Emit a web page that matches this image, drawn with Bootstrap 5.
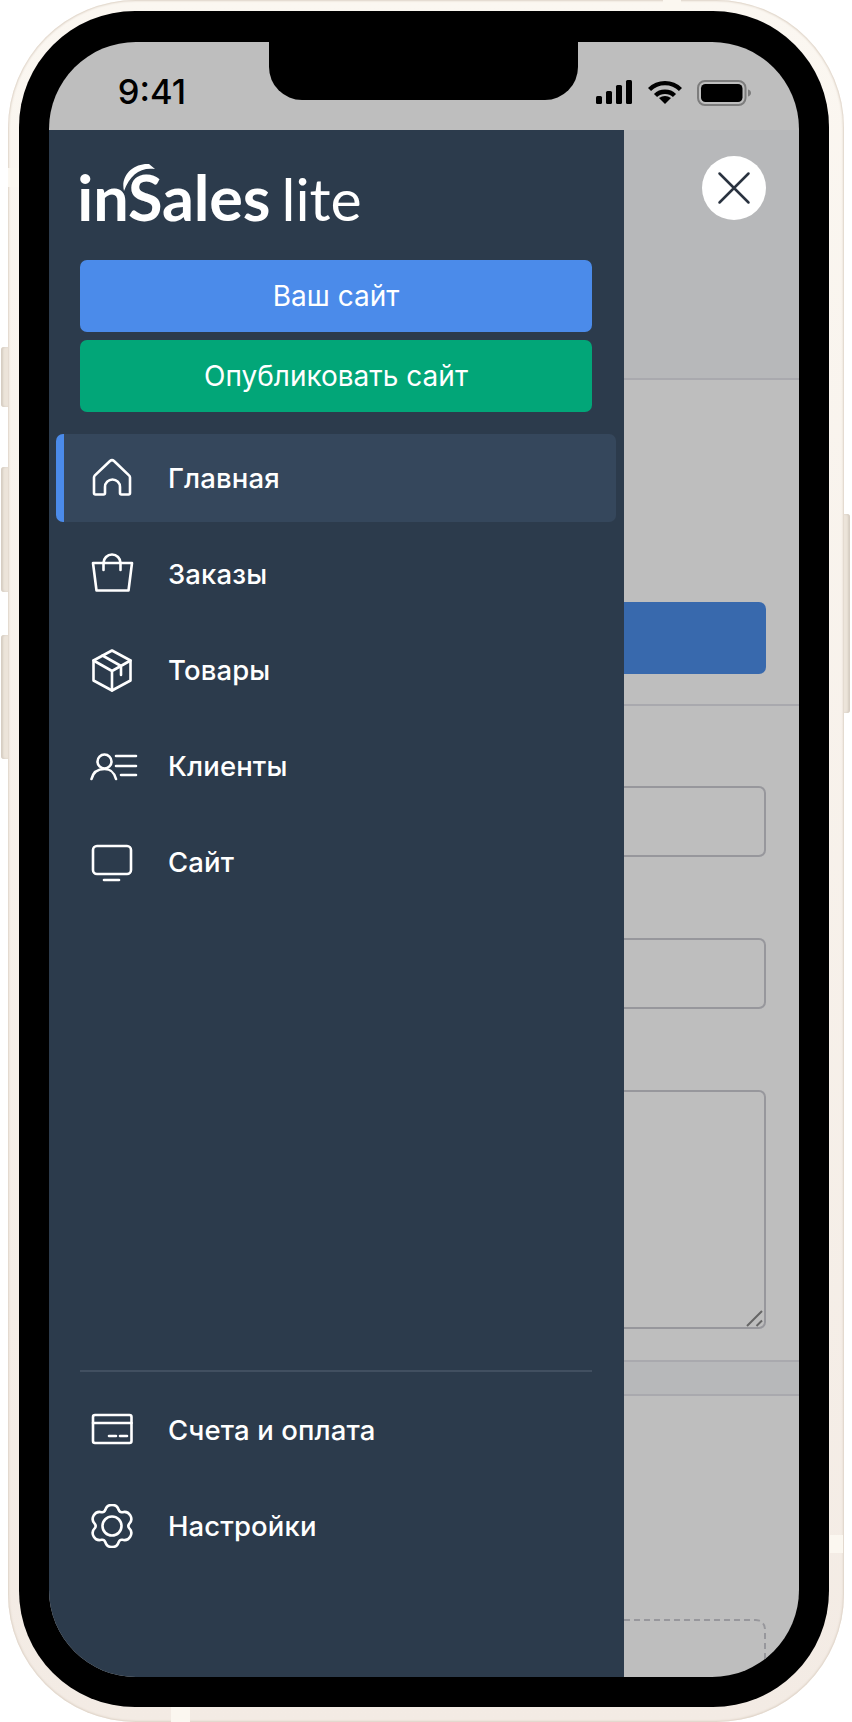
<!doctype html>
<html lang="ru">
<head>
<meta charset="utf-8">
<title>inSales lite</title>
<link href="https://cdn.jsdelivr.net/npm/bootstrap@5.3.0/dist/css/bootstrap.min.css" rel="stylesheet">
<style>
html,body{margin:0;background:#fff;font-family:"Inter","Liberation Sans",sans-serif}
.stage{width:852px;height:1722px;padding-left:8px;position:relative;overflow:hidden}
.shell{width:835.5px;height:1722px;padding:11px 14.8px 15.3px 11px;border-radius:128px;background:linear-gradient(180deg,#fbf7f1,#f3ebe4);position:relative;box-shadow:inset 0 0 2px 1px #ddd2c6}
.bezel{height:100%;padding:30.5px 30px 30px 30.3px;border-radius:116px;background:#000}
.screen{height:100%;border-radius:87px;overflow:hidden;background:#bebebe;position:relative;display:flex;flex-direction:column}
.sidekey{position:absolute;width:8px;background:#ece4da;box-shadow:inset 2px 0 2px #d6cdc2}
.key1{left:1px;top:347px;height:60px;border-radius:3px 0 0 3px}
.key2{left:1px;top:467px;height:125px;border-radius:3px 0 0 3px}
.key3{left:1px;top:635px;height:124px;border-radius:3px 0 0 3px}
.key4{left:843px;top:514px;height:199px;width:7px;border-radius:0 3px 3px 0;box-shadow:inset -2px 0 2px #d6cdc2}
.band{position:absolute;background:#fbf7f0}
.band1{left:171px;top:1707px;width:19px;height:15px}
.band2{left:830px;top:1535px;width:13px;height:18px}
.band3{left:8px;top:168px;width:11px;height:19px}
.band4{left:663px;top:0;width:18px;height:11px}
.statusbar{height:88.5px;flex:none;padding:38px 47.7px 0 68.5px;color:#000;font-size:34.5px;font-weight:500;line-height:24px}
.notch{position:absolute;left:220px;top:-1px;width:309px;height:59.5px;background:#000;border-radius:0 0 33px 33px}
.sys{gap:15.5px}
.workarea{flex:1;min-height:0}
.drawer{width:574.7px;flex:none;background:#2c3b4c;color:#fff;padding-bottom:107px}
.logo{height:130px;padding:29px 0 0 28px;position:relative;font-family:"Lato","Liberation Sans",sans-serif;font-size:63px;line-height:76px;white-space:nowrap;letter-spacing:-.15px}
.logo b{font-weight:700}
.logo i{font-style:normal;font-weight:400;font-size:59px;margin-left:-4px;letter-spacing:0}
.swoosh{position:absolute;left:73px;top:31px}
.actions{padding:0 32px 0 30.7px;gap:8px;margin-bottom:22px}
.act{height:72px;font-size:28px;font-weight:400;color:#fff;border:0;border-radius:7px;display:flex;align-items:center;justify-content:center}
.act-blue{background:#4b8bea}
.act-green{background:#02a678}
.menu{padding:0 8px 0 6.7px;gap:8px}
.entry{height:88px;padding-left:34px;gap:30px;color:#fff;font-size:27.5px;font-weight:500;letter-spacing:.12px;text-decoration:none;border-radius:7px}
.entry span{position:relative;top:1px}
.entry svg{flex:none;fill:none;stroke:#fff;stroke-width:2.6;stroke-linecap:round;stroke-linejoin:round}
.entry-on{background:linear-gradient(90deg,#4b8bea 8px,#35475c 8px)}
.rule{height:2px;background:#414f60;margin:0 32px 14px 30.7px}
.backdrop{overflow:hidden}
.bd-top{height:250px;background:#b7b8ba;border-bottom:2px solid #a9a9ae;flex:none}
.bd-btn{height:72px;margin:222px 33px 0 0;background:#3869ad;border-radius:0 7px 7px 0;flex:none}
.bd-line{height:2px;margin-top:30px;background:#a9a9ae;flex:none}
.bd-field{height:71px;margin-right:33px;border:2px solid #97979c;border-left:0;border-radius:0 7px 7px 0;flex:none}
.f1{margin-top:80px}
.f2{margin-top:81px}
.bd-area{height:239px;margin:81px 33px 0 0;border:2px solid #97979c;border-left:0;border-radius:0 7px 7px 0;flex:none}
.bd-band{height:36px;margin-top:31px;background:#b7b8ba;border-top:2px solid #a9a9ae;border-bottom:2px solid #a9a9ae;flex:none}
.bd-drop{height:120px;margin:223px 33px 0 0;border:2px dashed #97979c;border-left:0;border-radius:0 10px 10px 0;flex:none}
.closer{position:absolute;left:652.5px;top:114.5px;width:64px;height:64px;border-radius:50%;background:#fff;border:0;padding:0;display:flex;align-items:center;justify-content:center}
</style>
</head>
<body>
<div class="stage">
  <div class="sidekey key1"></div><div class="sidekey key2"></div><div class="sidekey key3"></div><div class="sidekey key4"></div>
  <div class="shell">
    <div class="bezel">
      <div class="screen">
        <div class="statusbar d-flex justify-content-between align-items-start">
          <span>9:41</span>
          <div class="d-flex align-items-start sys">
            <svg width="36" height="24" viewBox="0 0 36 24"><rect x="0" y="16" width="6" height="8" rx="1.5"/><rect x="10" y="11" width="6" height="13" rx="1.5"/><rect x="20" y="5" width="6" height="19" rx="1.5"/><rect x="30" y="0" width="6" height="24" rx="1.5"/></svg>
            <svg width="34" height="24" viewBox="0 0 34 24" fill="none" stroke="#000" stroke-width="4.4"><path d="M1.5 9.5C10 1 24 1 32.5 9.5"/><path d="M7.5 15.5C12.5 10.5 21.5 10.5 26.5 15.5"/><path d="M17 24L11 18Q17 14 23 18Z" fill="#000" stroke="none"/></svg>
            <svg width="54" height="26" viewBox="0 0 54 26"><rect x="1" y="1" width="47.500" height="24" rx="7" fill="none" stroke="#7d7d7d" stroke-width="2"/><rect x="4" y="4" width="41.500" height="18" rx="4.500" fill="#000"/><path d="M51 9.500c2 .6 3 1.900 3 3.500s-1 2.900-3 3.500z" fill="#7d7d7d"/></svg>
          </div>
        </div>
        <div class="notch"></div>
        <div class="workarea d-flex">
          <aside class="drawer d-flex flex-column">
            <div class="logo">
              <b>inSales</b><i> lite</i>
              <svg class="swoosh" width="36" height="32" viewBox="0 0 36 32"><path d="M2 30C-2 14 12 2 27 3L33 8C18 6 8 14 2 30Z" fill="#fff"/></svg>
            </div>
            <div class="actions d-flex flex-column">
              <a class="btn act act-blue" href="#">Ваш сайт</a>
              <a class="btn act act-green" href="#">Опубликовать сайт</a>
            </div>
            <nav class="menu d-flex flex-column flex-grow-1">
              <a class="entry entry-on d-flex align-items-center" href="#">
                <svg width="48" height="44" viewBox="0 0 48 44"><path d="M4 37V21.500a3 3 0 0 1 .9-2.100L20 5a3 3 0 0 1 4 0L39 19.400a3 3 0 0 1 1 2.100V37a1.500 1.500 0 0 1-1.500 1.500H31.500a1.500 1.500 0 0 1-1.500-1.500V31a7.500 7.500 0 0 0-15 0V37a1.500 1.500 0 0 1-1.500 1.500H5.500A1.500 1.500 0 0 1 4 37Z"/></svg>
                <span>Главная</span>
              </a>
              <a class="entry d-flex align-items-center" href="#">
                <svg width="48" height="44" viewBox="0 0 48 44"><path d="M3 11H42L38.500 38.500H6.500Z"/><path d="M13.500 18V11a8.500 8.500 0 0 1 17 0V18"/></svg>
                <span>Заказы</span>
              </a>
              <a class="entry d-flex align-items-center" href="#">
                <svg width="48" height="44" viewBox="0 0 48 44"><path d="M22 2.500L40.500 12.500V32.500L22 42.500L3.500 32.500V12.500Z"/><path d="M3.500 12.500L22 23L40.500 12.500M22 23V42.500M12.500 7.500L31 18V27"/></svg>
                <span>Товары</span>
              </a>
              <a class="entry d-flex align-items-center" href="#">
                <svg width="48" height="44" viewBox="0 0 48 44"><circle cx="14.500" cy="17.500" r="7"/><path d="M1.500 35C3 28.500 8 25 14.500 25S24 28 26 35"/><path d="M26 12H46M26 22H46M31 31H46"/></svg>
                <span>Клиенты</span>
              </a>
              <a class="entry d-flex align-items-center" href="#">
                <svg width="48" height="44" viewBox="0 0 48 44"><rect x="3" y="6" width="38" height="28" rx="4"/><path d="M14 40H29"/></svg>
                <span>Сайт</span>
              </a>
              <div class="flex-grow-1"></div>
            </nav>
            <div class="rule"></div>
            <nav class="menu d-flex flex-column">
              <a class="entry d-flex align-items-center" href="#">
                <svg width="48" height="44" viewBox="0 0 48 44"><rect x="3" y="7" width="38.500" height="28" rx="2"/><path d="M3 15H41.500M19 28H26M30 28H37"/></svg>
                <span>Счета и оплата</span>
              </a>
              <a class="entry d-flex align-items-center" href="#">
                <svg width="48" height="44" viewBox="0 0 48 44"><path d="M15.240 6.070A7 7 0 0 1 28.760 6.070Q29.750 8.580 32.410 8.180A7 7 0 0 1 39.170 19.890Q37.500 22 39.170 24.110A7 7 0 0 1 32.410 35.820Q29.750 35.420 28.760 37.930A7 7 0 0 1 15.240 37.930Q14.250 35.420 11.590 35.820A7 7 0 0 1 4.830 24.110Q6.500 22 4.830 19.890A7 7 0 0 1 11.590 8.180Q14.250 8.580 15.240 6.070Z"/><circle cx="22" cy="22" r="9.500"/></svg>
                <span>Настройки</span>
              </a>
            </nav>
          </aside>
          <div class="backdrop flex-grow-1 d-flex flex-column">
            <div class="bd-top"></div>
            <div class="bd-btn"></div>
            <div class="bd-line"></div>
            <div class="bd-field f1"></div>
            <div class="bd-field f2"></div>
            <div class="bd-area d-flex align-items-end justify-content-end">
              <svg width="18" height="18" viewBox="0 0 18 18" fill="none" stroke="#666" stroke-width="2"><path d="M1 17L16 2M10.500 17L16 11.500"/></svg>
            </div>
            <div class="bd-band"></div>
            <div class="bd-drop"></div>
          </div>
        </div>
        <button class="closer" type="button" aria-label="Закрыть">
          <svg width="34" height="34" viewBox="0 0 34 34" fill="none" stroke="#2a3340" stroke-width="2.500" stroke-linecap="round"><path d="M2.500 2.500L31.500 31.500M31.500 2.500L2.500 31.500"/></svg>
        </button>
      </div>
    </div>
  </div>
  <div class="band band1"></div><div class="band band2"></div><div class="band band3"></div><div class="band band4"></div>
</div>
<script src="https://cdn.jsdelivr.net/npm/bootstrap@5.3.0/dist/js/bootstrap.bundle.min.js"></script>
</body>
</html>
